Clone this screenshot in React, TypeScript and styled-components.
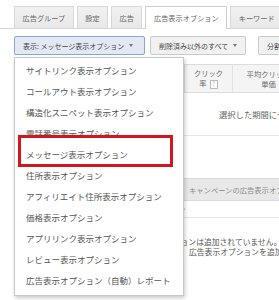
import styled, { createGlobalStyle } from "styled-components";

const GlobalStyle = createGlobalStyle`
  html, body {
    margin: 0;
    padding: 0;
    background: #fff;
  }
  body {
    font-family: "Noto Sans CJK JP", "Noto Sans", sans-serif;
    color: #333;
  }
`;

const Page = styled.div`
  position: relative;
  width: 279px;
  height: 300px;
  overflow: hidden;
  box-sizing: border-box;
  padding-top: 6px;
  background: #fff;
`;

const TabBar = styled.div`
  display: flex;
  align-items: flex-start;
  gap: 3px;
  height: 22px;
  padding-left: 14px;
  border-bottom: 1px solid #d6d6d6;
`;

const Tab = styled.div<{ $active?: boolean }>`
  box-sizing: border-box;
  display: flex;
  align-items: center;
  flex: none;
  height: ${(p) => (p.$active ? 23 : 22)}px;
  padding: 0 7.5px;
  border: 1px solid ${(p) => (p.$active ? "#cfcfcf" : "#d8d8d8")};
  border-bottom: none;
  background: ${(p) => (p.$active ? "#fff" : "linear-gradient(#f1f1f1, #e8e8e8)")};
  color: #666;
  font-size: 7.2px;
  white-space: nowrap;
`;

const Toolbar = styled.div`
  display: flex;
  gap: 5px;
  margin-top: 7px;
  padding-left: 14px;
`;

const Button = styled.div<{ $active?: boolean; $w: number; $gapLeft?: number }>`
  box-sizing: border-box;
  display: flex;
  align-items: center;
  flex: none;
  width: ${(p) => p.$w}px;
  height: 19px;
  margin-left: ${(p) => p.$gapLeft ?? 0}px;
  padding: 0 8px;
  border: 1px solid ${(p) => (p.$active ? "#86a5d8" : "#cacaca")};
  border-radius: 2px;
  background: ${(p) => (p.$active ? "#e3e9f2" : "#f1f1f1")};
  color: #444;
  font-size: 7px;
  white-space: nowrap;
  overflow: hidden;
`;

const Caret = styled.span`
  display: inline-block;
  margin-left: 5px;
  border-left: 2.5px solid transparent;
  border-right: 2.5px solid transparent;
  border-top: 3px solid #777;
`;

const Table = styled.div`
  margin-top: 9px;
  margin-left: 14px;
  width: 290px;
`;

const HeaderRow = styled.div`
  display: grid;
  grid-template-columns: 170px 48px 72px;
  height: 29px;
  box-sizing: border-box;
  border-top: 1px solid #dcdcdc;
  border-bottom: 1px solid #dcdcdc;
  background: #f4f4f4;
`;

const HeadCell = styled.div`
  display: flex;
  flex-direction: column;
  align-items: center;
  justify-content: center;
  border-left: 1px solid #e2e2e2;
  color: #666;
  font-size: 7.3px;
  line-height: 10px;
  white-space: nowrap;
`;

const Help = styled.span`
  display: inline-flex;
  align-items: center;
  justify-content: center;
  width: 6px;
  height: 7px;
  margin-left: 3px;
  border: 1px solid #bbb;
  background: #fff;
  color: #999;
  font-size: 5.5px;
  vertical-align: middle;
`;

const EmptyRow = styled.div`
  box-sizing: border-box;
  display: flex;
  align-items: center;
  height: 43px;
  padding-left: 205px;
  border-bottom: 1px solid #e6e6e6;
  color: #666;
  font-size: 8.3px;
  white-space: nowrap;
`;

const SectionBar = styled.div`
  box-sizing: border-box;
  display: flex;
  align-items: center;
  height: 23px;
  margin-top: 42px;
  padding-left: 175px;
  border-top: 1px solid #dadada;
  border-bottom: 1px solid #dadada;
  background: #e8e8e8;
  color: #8a8a8a;
  font-size: 7.3px;
  white-space: nowrap;
`;

const SubRow = styled.div`
  box-sizing: border-box;
  display: flex;
  align-items: center;
  height: 17px;
  padding-left: 84px;
  border-bottom: 1px solid #e6e6e6;
  color: #666;
  font-size: 7.3px;
  white-space: nowrap;
`;

const Notice = styled.div<{ $indent: number }>`
  padding-left: ${(p) => p.$indent}px;
  color: #555;
  font-size: 7.8px;
  line-height: 9.5px;
  white-space: nowrap;
`;

const NoticeBlock = styled.div`
  margin-top: 19px;
`;

const Menu = styled.div`
  position: absolute;
  z-index: 10;
  left: 14px;
  top: 57px;
  width: 170px;
  box-sizing: border-box;
  padding: 2px 0 4px;
  border: 1px solid #c8c8c8;
  background: #fff;
  box-shadow: 1px 2px 4px rgba(0, 0, 0, 0.22);
`;

const MenuItem = styled.div<{ $marked?: boolean }>`
  position: relative;
  z-index: ${(p) => (p.$marked ? 1 : "auto")};
  height: 21px;
  padding-left: 11px;
  color: #555;
  font-size: 8.5px;
  line-height: 21px;
  white-space: nowrap;
  overflow: ${(p) => (p.$marked ? "visible" : "hidden")};

  ${(p) =>
    p.$marked &&
    `
    &::before {
      content: "";
      position: absolute;
      z-index: -1;
      left: 3px;
      right: 10px;
      top: -9px;
      bottom: -2px;
      border: 3px solid #d2161e;
      background: #fff;
    }
  `}
`;

const tabs = ["広告グループ", "設定", "広告", "広告表示オプション", "キーワード"];

const options = [
  "サイトリンク表示オプション",
  "コールアウト表示オプション",
  "構造化スニペット表示オプション",
  "電話番号表示オプション",
  "メッセージ表示オプション",
  "住所表示オプション",
  "アフィリエイト住所表示オプション",
  "価格表示オプション",
  "アプリリンク表示オプション",
  "レビュー表示オプション",
  "広告表示オプション（自動）レポート",
];

export default function App() {
  return (
    <>
      <GlobalStyle />
      <Page>
        <TabBar>
          {tabs.map((t) => (
            <Tab key={t} $active={t === "広告表示オプション"}>
              {t}
            </Tab>
          ))}
        </TabBar>

        <Toolbar>
          <Button $active $w={131}>
            表示: メッセージ表示オプション
            <Caret />
          </Button>
          <Button $w={96}>
            削除済み以外のすべて
            <Caret />
          </Button>
          <Button $w={40} $gapLeft={7}>
            分割
          </Button>
        </Toolbar>

        <Table>
          <HeaderRow>
            <HeadCell />
            <HeadCell>
              <span>クリック</span>
              <span>
                率<Help>?</Help>
              </span>
            </HeadCell>
            <HeadCell>
              <span>平均クリック</span>
              <span>単価</span>
            </HeadCell>
          </HeaderRow>
          <EmptyRow>選択した期間にデータはありません。</EmptyRow>
          <SectionBar>キャンペーンの広告表示オプション</SectionBar>
          <SubRow>メッセージ表示オプション</SubRow>
          <NoticeBlock>
            <Notice $indent={112}>広告表示オプションは追加されていません。</Notice>
            <Notice $indent={175}>広告表示オプションを追加してください。</Notice>
          </NoticeBlock>
        </Table>

        <Menu>
          {options.map((o) => (
            <MenuItem key={o} $marked={o === "メッセージ表示オプション"}>
              {o}
            </MenuItem>
          ))}
        </Menu>
      </Page>
    </>
  );
}
